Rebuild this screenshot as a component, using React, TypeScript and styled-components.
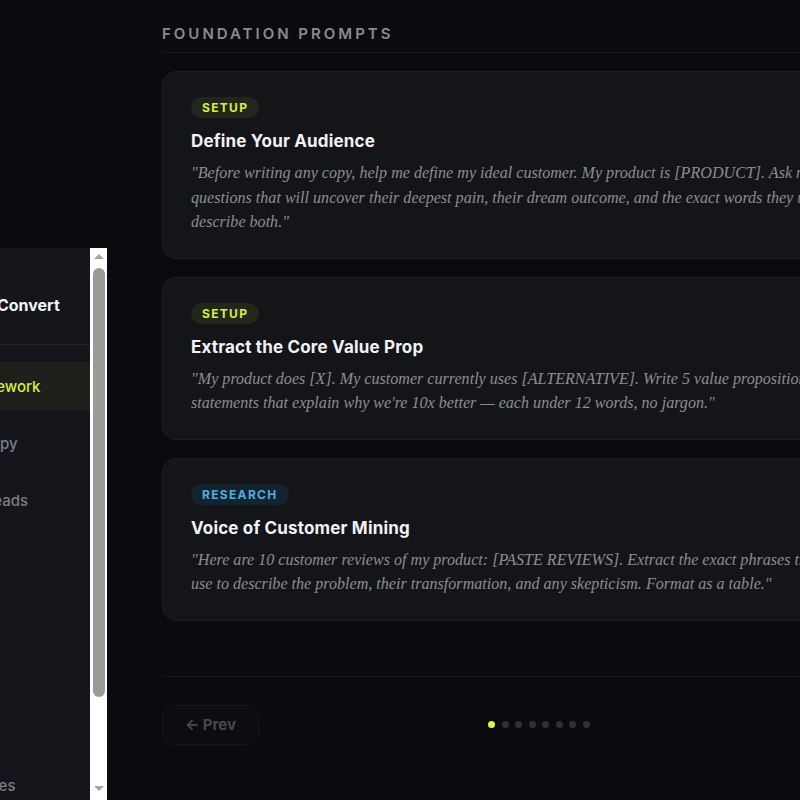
import React from 'react'
import styled, { createGlobalStyle } from 'styled-components'

const GlobalStyle = createGlobalStyle`
  html, body {
    margin: 0;
    padding: 0;
    background: #0b0b0f;
    overflow: hidden;
  }
  * {
    box-sizing: border-box;
  }
`

const displayFont = `Inter, "Noto Sans", sans-serif`
const serifFont = `"Liberation Serif", "DejaVu Serif", serif`

const Page = styled.main`
  width: 754px;
  margin-left: 162px;
  padding-top: 25px;
  font-family: ${displayFont};
`

const SectionHeading = styled.h2`
  margin: 0 0 18px;
  padding-bottom: 9px;
  border-bottom: 1px solid #18191e;
  font-size: 15px;
  line-height: 18px;
  font-weight: 600;
  letter-spacing: 0.2em;
  text-transform: uppercase;
  color: #8a8a92;
`

const CardList = styled.div`
  display: flex;
  flex-direction: column;
  gap: 18px;
`

const Card = styled.article`
  display: flex;
  flex-direction: column;
  align-items: flex-start;
  padding: 25px 28px 23px;
  background: #141519;
  border: 1px solid #1d1e24;
  border-radius: 14px;
`

type Tone = 'setup' | 'research'

const badgeTones: Record<Tone, { bg: string; fg: string }> = {
  setup: { bg: '#23261a', fg: '#d6f03f' },
  research: { bg: '#15232f', fg: '#4eaee0' },
}

const Badge = styled.span<{ $tone: Tone }>`
  display: flex;
  align-items: center;
  height: 21px;
  padding: 0 11px;
  border-radius: 11px;
  background: ${props => badgeTones[props.$tone].bg};
  color: ${props => badgeTones[props.$tone].fg};
  font-size: 12px;
  font-weight: 700;
  letter-spacing: 0.11em;
`

const CardTitle = styled.h3`
  margin: 12px 0 9px;
  font-size: 17px;
  line-height: 22px;
  font-weight: 700;
  color: #f2f2f4;
  letter-spacing: 0.01em;
`

const PromptText = styled.p`
  margin: 0;
  max-width: 648px;
  font-family: ${serifFont};
  font-style: italic;
  font-size: 16.1px;
  line-height: 24.5px;
  color: #8d8d94;
`

const Footer = styled.footer`
  margin-top: 55px;
  padding-top: 28px;
  border-top: 1px solid #17181d;
  display: grid;
  grid-template-columns: 1fr auto 1fr;
  align-items: center;
`

const PagerButton = styled.button<{ $align: 'start' | 'end' }>`
  justify-self: ${props => props.$align};
  height: 40px;
  padding: 0 22px;
  border-radius: 12px;
  border: 1px solid #16171c;
  background: #0c0c11;
  color: #48484f;
  font-family: ${displayFont};
  font-size: 15px;
  font-weight: 700;
  cursor: pointer;
`

const Dots = styled.div`
  display: flex;
  gap: 6.5px;
`

const Dot = styled.span<{ $active?: boolean }>`
  width: 7px;
  height: 7px;
  border-radius: 50%;
  background: ${props => (props.$active ? '#e3f53b' : '#303036')};
`

// slide-out chapter menu, parked mostly off the left edge
const Drawer = styled.aside`
  position: fixed;
  top: 248px;
  left: -177px;
  width: 284px;
  height: 552px;
  display: flex;
  background: #15161b;
  font-family: ${displayFont};
`

const DrawerBody = styled.div`
  flex: 1;
  min-width: 0;
  overflow: hidden;
`

const ScrollRail = styled.div`
  width: 17px;
  flex-shrink: 0;
  display: flex;
  flex-direction: column;
  align-items: center;
  background: #ffffff;
`

const RailArrow = styled.span<{ $dir: 'up' | 'down' }>`
  width: 0;
  height: 0;
  border-left: 5px solid transparent;
  border-right: 5px solid transparent;
  ${props =>
    props.$dir === 'up'
      ? 'border-bottom: 5px solid #a3a3a3; margin-top: 6px;'
      : 'border-top: 5px solid #a3a3a3; margin: auto 0 9px;'}
`

const RailThumb = styled.span`
  width: 12px;
  height: 429px;
  margin-top: 9px;
  border-radius: 6px;
  background: #9a9a9a;
`

const DrawerHeader = styled.div`
  padding: 45px 20px 27px;
  border-bottom: 1px solid #24252b;
  font-size: 16px;
  line-height: 24px;
  font-weight: 700;
  color: #f3f3f5;
  white-space: nowrap;
`

const NavList = styled.nav`
  display: flex;
  flex-direction: column;
  gap: 9px;
  padding: 17px 0 100px;
`

const NavItem = styled.a<{ $active?: boolean }>`
  display: flex;
  align-items: center;
  gap: 12px;
  height: 48px;
  padding: 0 20px 0 28px;
  font-size: 15px;
  font-weight: 500;
  white-space: nowrap;
  text-decoration: none;
  color: ${props => (props.$active ? '#d6f03f' : '#7d7d84')};
  background: ${props => (props.$active ? '#1f201c' : 'transparent')};
`

const NavNumber = styled.span`
  font-size: 12px;
  font-weight: 600;
  opacity: 0.6;
`

const prompts: { tone: Tone; label: string; title: string; body: string }[] = [
  {
    tone: 'setup',
    label: 'SETUP',
    title: 'Define Your Audience',
    body:
      '"Before writing any copy, help me define my ideal customer. My product is [PRODUCT]. Ask me 5 questions that will uncover their deepest pain, their dream outcome, and the exact words they use to describe both."',
  },
  {
    tone: 'setup',
    label: 'SETUP',
    title: 'Extract the Core Value Prop',
    body:
      '"My product does [X]. My customer currently uses [ALTERNATIVE]. Write 5 value proposition statements that explain why we\'re 10x better — each under 12 words, no jargon."',
  },
  {
    tone: 'research',
    label: 'RESEARCH',
    title: 'Voice of Customer Mining',
    body:
      '"Here are 10 customer reviews of my product: [PASTE REVIEWS]. Extract the exact phrases they use to describe the problem, their transformation, and any skepticism. Format as a table."',
  },
]

const chapters = [
  'Foundation Framework',
  'Landing Page Copy',
  'Headlines and Leads',
  'Ad Creative',
  'Email Flows',
  'SEO Content',
  'Social Posts',
  'Launch Sequences',
]

export default function App() {
  return (
    <>
      <GlobalStyle />
      <Page>
        <SectionHeading>Foundation Prompts</SectionHeading>
        <CardList>
          {prompts.map(p => (
            <Card key={p.title}>
              <Badge $tone={p.tone}>{p.label}</Badge>
              <CardTitle>{p.title}</CardTitle>
              <PromptText>{p.body}</PromptText>
            </Card>
          ))}
        </CardList>
        <Footer>
          <PagerButton $align="start">← Prev</PagerButton>
          <Dots>
            {Array.from({ length: 8 }).map((_, i) => (
              <Dot key={i} $active={i === 0} />
            ))}
          </Dots>
          <PagerButton $align="end">Next →</PagerButton>
        </Footer>
      </Page>
      <Drawer>
        <DrawerBody>
          <DrawerHeader>Copy Prompts That Convert</DrawerHeader>
          <NavList>
            {chapters.map((c, i) => (
              <NavItem key={c} $active={i === 0} href="#">
                <NavNumber>{String(i + 1).padStart(2, '0')}</NavNumber>
                {c}
              </NavItem>
            ))}
          </NavList>
        </DrawerBody>
        <ScrollRail>
          <RailArrow $dir="up" />
          <RailThumb />
          <RailArrow $dir="down" />
        </ScrollRail>
      </Drawer>
    </>
  )
}
